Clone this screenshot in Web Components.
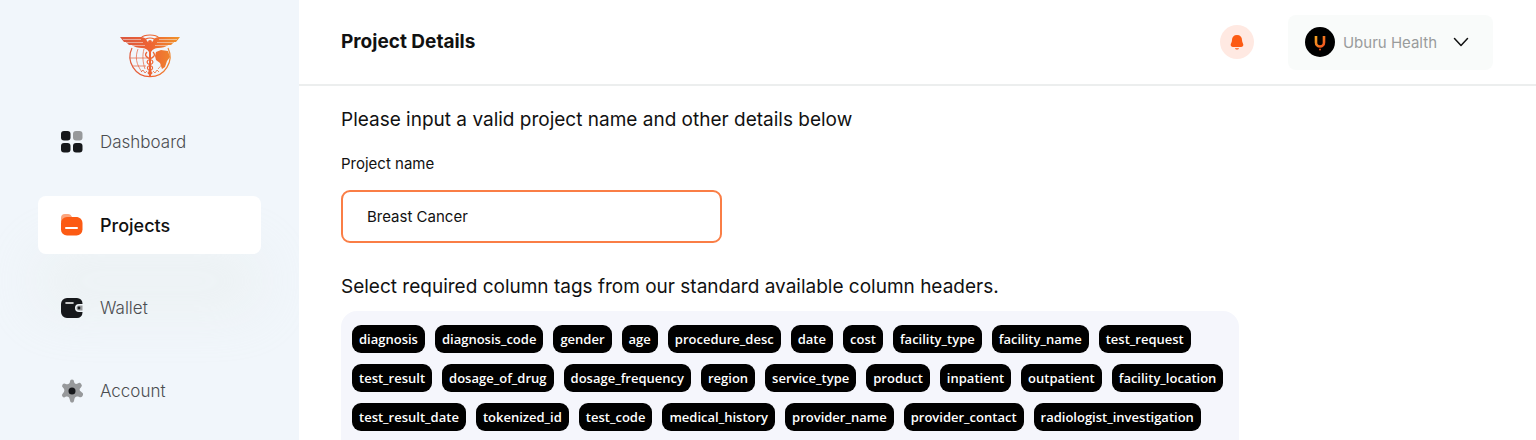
<!DOCTYPE html>
<html lang="en">
<head>
<meta charset="utf-8">
<meta name="viewport" content="width=device-width, initial-scale=1">
<title>Project Details</title>
<style>
  body {
    margin: 0;
    background: #fff;
    color: #111;
    font-family: Inter, "Liberation Sans", sans-serif;
  }
</style>
</head>
<body>
<app-shell>
  <side-bar slot="sidebar">
    <nav-item icon="dashboard">Dashboard</nav-item>
    <nav-item icon="projects" active>Projects</nav-item>
    <nav-item icon="wallet">Wallet</nav-item>
    <nav-item icon="account">Account</nav-item>
  </side-bar>
  <top-bar slot="header">
    Project Details
    <account-menu slot="actions">Uburu Health</account-menu>
  </top-bar>
  <project-form></project-form>
</app-shell>

<script>
const icons = {
  dashboard: `
    <rect x="1" y="1" width="9.500" height="9.500" rx="3" fill="#16181b"/>
    <rect x="13" y="1" width="9.500" height="9.500" rx="3" fill="#97999b"/>
    <rect x="1" y="13" width="9.500" height="9.500" rx="3" fill="#16181b"/>
    <rect x="13" y="13" width="9.500" height="9.500" rx="3" fill="#16181b"/>`,
  projects: `
    <path d="M1 8V5a4 4 0 0 1 4-4h3c2 0 3 1 4 3h6v5H1z" fill="#fba57d"/>
    <rect x="1" y="4" width="21.500" height="18.500" rx="6" fill="#fc5b14"/>
    <path d="M6 15h11" stroke="#fff" stroke-width="2" stroke-linecap="round"/>`,
  wallet: `
    <path d="M7 2h10a5.500 5.500 0 0 1 5.500 5.500V8H19a4 4 0 0 0 0 8h3.500v.5A5.500 5.500 0 0 1 17 22H7a6 6 0 0 1-6-6V8a6 6 0 0 1 6-6z" fill="#16181b"/>
    <path d="M6 7h7" stroke="#fff" stroke-width="1.600" stroke-linecap="round"/>
    <path d="M22.500 9.500H19a2.500 2.500 0 0 0 0 5h3.500z" fill="#97999b"/>
    <circle cx="19" cy="12" r="1.400" fill="#16181b"/>`,
  account: `
    <path d="M10 2.500a2 2 0 0 1 4 0c.3 2.200 1.600 3 3.700 2.100a2 2 0 0 1 3.200 3.800c-1.700 1.400-1.700 2.800 0 4.200l.8.700a2 2 0 0 1-2.800 4.500c-2.600-1-4-.2-4.500 2.300l-.3 1.500a2 2 0 0 1-4.100 0c-.3-3.200-1.900-4.900-4.500-3.800a2.100 2.100 0 0 1-2.700-3.400c2-1.700 2.100-4 .3-5.600a2.100 2.100 0 0 1 2.700-3.800c2.400.8 3.900 0 4.200-2.500z" fill="#97999b"/>
    <circle cx="12" cy="12" r="3.500" fill="#16181b"/>`
};

class AppShell extends HTMLElement {
  connectedCallback() {
    this.attachShadow({ mode: 'open' });
    this.shadowRoot.innerHTML = `
      <style>
        :host {
          display: grid;
          grid-template-columns: 299px minmax(0, 1fr);
          height: 100vh;
        }
        .content {
          display: flex;
          flex-direction: column;
          min-height: 0;
        }
        main {
          flex: 1;
          min-height: 0;
          overflow-y: auto;
          scrollbar-width: none;
        }
      </style>
      <slot name="sidebar"></slot>
      <div class="content">
        <slot name="header"></slot>
        <main><slot></slot></main>
      </div>
    `;
  }
}

class BrandLogo extends HTMLElement {
  connectedCallback() {
    this.attachShadow({ mode: 'open' });
    this.shadowRoot.innerHTML = `
      <style>
        :host { display: block; }
        svg { display: block; }
      </style>
      <svg width="60" height="44" viewBox="0 0 60 44" fill="none" role="img" aria-label="Logo">
        <defs>
          <linearGradient id="fade" gradientUnits="userSpaceOnUse" x1="0" y1="0" x2="60" y2="0">
            <stop offset="0" stop-color="#d9573f"/>
            <stop offset=".5" stop-color="#ee6334"/>
            <stop offset="1" stop-color="#f0942a"/>
          </linearGradient>
        </defs>
        <g stroke="url(#fade)">
          <path d="M12 14a20 20 0 1 0 36 0" stroke-width="1.200"/>
          <path d="M18 15c-3 8-2 15 4 23M10 24h18M13 32h13M24 15c-2 7-1 14 1 20M38 35c3-3 5-6 6-9" stroke-width=".7"/>
          <path d="M21 4c3-4 15-4 18 0M24 7c2-4 10-4 12 0" stroke-width="1.200"/>
          <path d="M30 7v35" stroke-width="2"/>
          <path d="M27 18c-3 3-1 5 3 7s4 4 0 6-3 4 0 6 2 2 0 4M33 18c3 3 1 5-3 7s-4 4 0 6 3 4 0 6-2 2 0 4" stroke-width="1.200"/>
          <path d="M21 38l2-2 2 3 2-2M39 38l-2-2-2 3-2-2" stroke-width=".8"/>
        </g>
        <g fill="url(#fade)">
          <path d="M0 3h19c5 0 7 1 8 4l2 2v9c-2-3-4-4-7-4-4 0-8-1-10-3H9L6 8H4z"/>
          <path d="M60 3H41c-5 0-7 1-8 4l-2 2v9c2-3 4-4 7-4 4 0 8-1 10-3h3l3-3h2z"/>
          <path d="M36 18l5-2 7 1 2 6-3 4-2 6-3 2-2-6-4-3-1-4z"/>
          <circle cx="30" cy="8" r="2"/>
        </g>
        <path d="M3 5.500h18M7 8.500h16M39 5.500h18M37 8.500h16M13 11.500h12M35 11.500h12" stroke="#f1f6fb" stroke-width=".5"/>
      </svg>
    `;
  }
}

class SideBar extends HTMLElement {
  connectedCallback() {
    this.attachShadow({ mode: 'open' });
    this.shadowRoot.innerHTML = `
      <style>
        :host {
          display: flex;
          flex-direction: column;
          align-items: center;
          gap: 35px;
          padding: 34px 38px 0;
          background: #f1f6fb;
          overflow: hidden;
        }
        nav {
          display: flex;
          flex-direction: column;
          gap: 25px;
          width: 100%;
        }
      </style>
      <brand-logo></brand-logo>
      <nav aria-label="Main"><slot></slot></nav>
    `;
  }
}

class NavItem extends HTMLElement {
  connectedCallback() {
    const active = this.hasAttribute('active');
    this.attachShadow({ mode: 'open' });
    this.shadowRoot.innerHTML = `
      <style>
        :host {
          display: block;
          position: relative;
          z-index: 1;
        }
        :host([active]) { z-index: 0; }
        a {
          display: flex;
          align-items: center;
          gap: 16px;
          height: 58px;
          padding: 0 22px;
          border-radius: 8px;
          color: #4b4d50;
          font-size: 17px;
          font-weight: 300;
          text-decoration: none;
        }
        :host([active]) a {
          background: #fff;
          box-shadow: 0 56px 56px rgba(226, 232, 226, 0.3);
          color: #111;
          font-size: 18px;
          font-weight: 500;
        }
      </style>
      <a href="#"${active ? ' aria-current="page"' : ''}>
        <svg width="24" height="24" viewBox="0 0 24 24" fill="none" aria-hidden="true">${icons[this.getAttribute('icon')]}</svg>
        <span><slot></slot></span>
      </a>
    `;
  }
}

class TopBar extends HTMLElement {
  connectedCallback() {
    this.attachShadow({ mode: 'open' });
    this.shadowRoot.innerHTML = `
      <style>
        :host { display: block; }
        header {
          display: flex;
          align-items: center;
          justify-content: space-between;
          height: 84px;
          padding: 0 43px 0 42px;
          border-bottom: 2px solid #eceeee;
        }
        h1 {
          margin: 0;
          font-size: 19px;
          font-weight: 700;
          line-height: 28px;
        }
        .actions {
          display: flex;
          align-items: center;
          gap: 34px;
        }
        .bell {
          display: grid;
          place-items: center;
          width: 34px;
          height: 34px;
          padding: 0;
          border: 0;
          border-radius: 50%;
          background: #ffe9e2;
          cursor: pointer;
        }
      </style>
      <header>
        <h1><slot></slot></h1>
        <div class="actions">
          <button class="bell" type="button" aria-label="Notifications">
            <svg width="16" height="18" viewBox="0 0 16 18" fill="#fc5b14" aria-hidden="true">
              <path d="M8 2C4.800 2 3 4 3 7c0 2-1 3-1.300 4.500C1.500 13 2.500 14 4 14h8c1.500 0 2.500-1 2.300-2.500C14 10 13 9 13 7c0-3-1.800-5-5-5z"/>
              <path d="M6 15.200h4c-.3 1-1 1.400-2 1.400s-1.700-.4-2-1.400z"/>
            </svg>
          </button>
          <slot name="actions"></slot>
        </div>
      </header>
    `;
  }
}

class AccountMenu extends HTMLElement {
  connectedCallback() {
    this.attachShadow({ mode: 'open' });
    this.shadowRoot.innerHTML = `
      <style>
        :host { display: block; }
        button {
          display: flex;
          align-items: center;
          gap: 8px;
          height: 55px;
          padding: 0 24px 0 17px;
          border: 0;
          border-radius: 8px;
          background: #f9fbfa;
          color: #999c9c;
          font-family: Inter, "Liberation Sans", sans-serif;
          font-size: 15px;
          font-weight: 400;
          cursor: pointer;
        }
        .chevron { margin-left: 8px; }
      </style>
      <button type="button" aria-haspopup="menu">
        <svg width="30" height="30" viewBox="0 0 30 30" fill="none" aria-hidden="true">
          <defs>
            <linearGradient id="u" x1="0" y1="0" x2="1" y2="1">
              <stop offset="0" stop-color="#f5a623"/>
              <stop offset="1" stop-color="#f4511e"/>
            </linearGradient>
          </defs>
          <circle cx="15" cy="15" r="15" fill="#000"/>
          <path d="M11 9v6.500a4 4 0 0 0 8 0V9" stroke="url(#u)" stroke-width="2.600"/>
          <circle cx="15" cy="22.500" r="1" fill="#f4511e"/>
        </svg>
        <span><slot></slot></span>
        <svg class="chevron" width="16" height="16" viewBox="0 0 16 16" fill="none" stroke="#111" stroke-width="1.500" stroke-linecap="round" stroke-linejoin="round" aria-hidden="true">
          <path d="M1.500 4.500L8 11.500l6.500-7"/>
        </svg>
      </button>
    `;
  }
}

class TagChip extends HTMLElement {
  connectedCallback() {
    this.attachShadow({ mode: 'open' });
    this.shadowRoot.innerHTML = `
      <style>
        :host { display: block; }
        button {
          display: block;
          height: 28px;
          padding: 0 7px;
          border: 0;
          border-radius: 9px;
          background: #000;
          color: #fff;
          font-family: "Open Sans", "Liberation Sans", sans-serif;
          font-size: 13px;
          font-weight: 600;
          white-space: nowrap;
          cursor: pointer;
        }
      </style>
      <button type="button" aria-pressed="true"><slot></slot></button>
    `;
  }
}

class ProjectForm extends HTMLElement {
  connectedCallback() {
    const tags = [
      'diagnosis', 'diagnosis_code', 'gender', 'age', 'procedure_desc', 'date', 'cost',
      'facility_type', 'facility_name', 'test_request', 'test_result', 'dosage_of_drug',
      'dosage_frequency', 'region', 'service_type', 'product', 'inpatient', 'outpatient',
      'facility_location', 'test_result_date', 'tokenized_id', 'test_code',
      'medical_history', 'provider_name', 'provider_contact', 'radiologist_investigation'
    ];
    this.attachShadow({ mode: 'open' });
    this.shadowRoot.innerHTML = `
      <style>
        :host { display: block; }
        form {
          display: flex;
          flex-direction: column;
          padding: 20px 42px;
        }
        h2 {
          margin: 0;
          font-size: 19px;
          font-weight: 400;
          line-height: 28px;
        }
        .field {
          display: flex;
          flex-direction: column;
          gap: 14px;
          max-width: 381px;
          margin: 18px 0 30px;
        }
        label {
          font-size: 15px;
          line-height: 24px;
        }
        input {
          box-sizing: border-box;
          width: 100%;
          height: 53px;
          padding: 0 24px;
          border: 2px solid #fa7e46;
          border-radius: 9px;
          background: #fff;
          color: #111;
          font: 400 15px Inter, "Liberation Sans", sans-serif;
          outline: none;
        }
        .tags {
          display: flex;
          flex-wrap: wrap;
          align-content: flex-start;
          gap: 11px 10px;
          box-sizing: border-box;
          max-width: 898px;
          min-height: 180px;
          margin-top: 10px;
          padding: 14px 11px;
          border-radius: 16px;
          background: #f5f6fc;
        }
      </style>
      <form>
        <h2>Please input a valid project name and other details below</h2>
        <div class="field">
          <label for="name">Project name</label>
          <input id="name" type="text" value="Breast Cancer">
        </div>
        <h2 id="tags-title">Select required column tags from our standard available column headers.</h2>
        <div class="tags" role="group" aria-labelledby="tags-title">
          ${tags.map(tag => `<tag-chip>${tag}</tag-chip>`).join('')}
        </div>
      </form>
    `;
  }
}

customElements.define('app-shell', AppShell);
customElements.define('brand-logo', BrandLogo);
customElements.define('side-bar', SideBar);
customElements.define('nav-item', NavItem);
customElements.define('top-bar', TopBar);
customElements.define('account-menu', AccountMenu);
customElements.define('tag-chip', TagChip);
customElements.define('project-form', ProjectForm);
</script>
</body>
</html>
